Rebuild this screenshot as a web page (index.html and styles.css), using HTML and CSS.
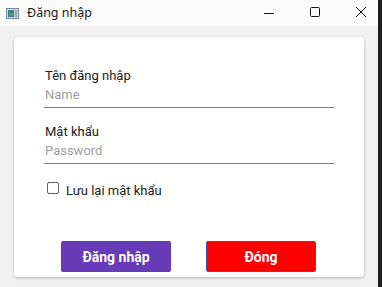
FILE: index.html
```html
<!DOCTYPE html>
<html lang="vi">
<head>
  <meta charset="UTF-8">
  <title>Đăng nhập</title>
  <link rel="stylesheet" href="styles.css">
</head>
<body>
  <div class="window">
    <div class="titlebar">
      <div class="app-icon">
        <svg width="13" height="11" viewBox="0 0 13 11">
          <rect x="0.5" y="0.5" width="12" height="10" fill="#cfd8dc" stroke="#7a8a99"/>
          <rect x="2" y="2" width="6" height="7" fill="#3b7a9e"/>
          <rect x="3" y="5" width="4" height="3" fill="#5aa05a"/>
          <rect x="9" y="2" width="2" height="7" fill="#9aa4ad"/>
        </svg>
      </div>
      <div class="title">Đăng nhập</div>
      <div class="controls">
        <svg class="ctl" width="12" height="12" viewBox="0 0 12 12"><path d="M1 7.5h10" stroke="#111" stroke-width="1"/></svg>
        <svg class="ctl" width="12" height="12" viewBox="0 0 12 12"><rect x="1.5" y="1.5" width="9" height="9" rx="1" fill="none" stroke="#111" stroke-width="1"/></svg>
        <svg class="ctl" width="12" height="12" viewBox="0 0 12 12"><path d="M1 1l10 10M11 1L1 11" stroke="#111" stroke-width="1"/></svg>
      </div>
    </div>
    <div class="content">
      <div class="card">
        <div class="field">
          <label class="field-label">Tên đăng nhập</label>
          <input class="field-input" type="text" placeholder="Name">
        </div>
        <div class="field">
          <label class="field-label">Mật khẩu</label>
          <input class="field-input" type="password" placeholder="Password">
        </div>
        <label class="remember">
          <span class="box"></span>
          <span class="remember-text">Lưu lại mật khẩu</span>
        </label>
        <div class="actions">
          <button class="btn btn-login">Đăng nhập</button>
          <button class="btn btn-close">Đóng</button>
        </div>
      </div>
    </div>
  </div>
</body>
</html>
```

FILE: styles.css
```css
html, body {
  margin: 0;
  padding: 0;
}
body {
  width: 382px;
  height: 287px;
  background: #1f1f1f;
  overflow: hidden;
}
.window {
  width: 378px;
  height: 287px;
  background: #f1f1f1;
  display: flex;
  flex-direction: column;
}
.titlebar {
  height: 26px;
  background: #fbfbfb;
  display: flex;
  align-items: center;
  font-family: "Segoe UI", "Noto Sans", sans-serif;
}
.app-icon {
  width: 13px;
  height: 11px;
  margin: 0 8px 0 6px;
  display: flex;
}
.title {
  font-size: 12.5px;
  color: #1a1a1a;
  flex: 1;
  padding-bottom: 2px;
}
.controls {
  display: flex;
  align-items: center;
  gap: 34px;
  margin-right: 11px;
  padding-bottom: 2px;
}
.content {
  flex: 1;
  padding: 11px 14px 10px 14px;
  display: flex;
}
.card {
  flex: 1;
  background: #fff;
  border-radius: 4px;
  box-shadow: 0 1px 3px rgba(0, 0, 0, 0.25);
  padding: 31px 30px 5px 30px;
  display: flex;
  flex-direction: column;
  font-family: Roboto, "Noto Sans", sans-serif;
}
.field {
  display: flex;
  flex-direction: column;
  margin-bottom: 16px;
}
.field-label {
  font-size: 13px;
  color: #212121;
  line-height: 15px;
  padding-left: 1px;
}
.field-input {
  border: none;
  border-bottom: 1px solid #7a7a7a;
  outline: none;
  font-family: Roboto, "Noto Sans", sans-serif;
  font-size: 13px;
  line-height: 15px;
  padding: 3px 0 5px 1px;
  margin-top: 1px;
  color: #333;
  background: transparent;
}
.field-input::placeholder {
  color: #9e9e9e;
}
.remember {
  display: flex;
  align-items: flex-start;
  gap: 7px;
  margin: 2px 0 0 3px;
  font-size: 13px;
  line-height: 15px;
  color: #212121;
}
.box {
  width: 10px;
  height: 10px;
  border: 1.5px solid #666;
  border-radius: 2px;
}
.remember-text {
  margin-top: 1px;
}
.actions {
  margin-top: auto;
  display: flex;
  justify-content: center;
  gap: 35px;
  padding-right: 1px;
}
.btn {
  width: 110px;
  height: 31px;
  border-radius: 2px;
  font-family: Roboto, "Noto Sans", sans-serif;
  font-size: 14px;
  font-weight: bold;
  color: #fff;
  cursor: pointer;
}
.btn-login {
  background: #673ab7;
  border: 1px solid #673ab7;
}
.btn-close {
  background: #ff0000;
  border: 1px solid #3f51b5;
}
```
